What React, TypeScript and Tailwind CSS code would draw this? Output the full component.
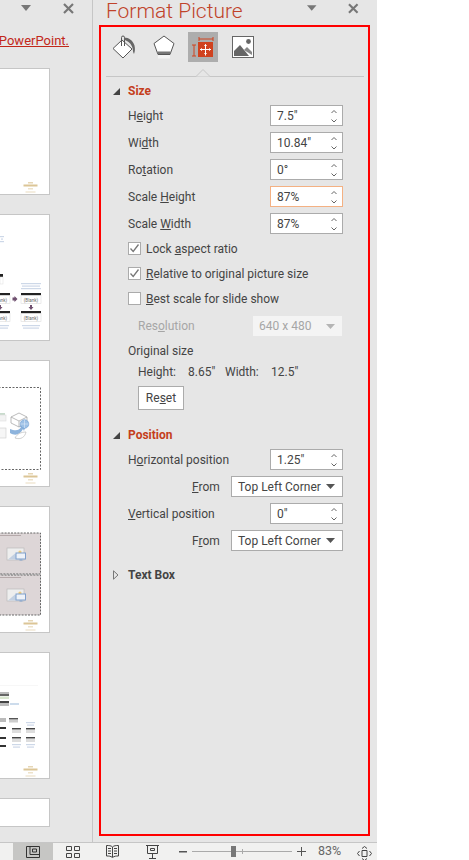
import type { ReactNode } from "react";

const font = "font-['Roboto','Open_Sans',sans-serif]";

function Spinner({ value, focused }: { value: string; focused?: boolean }) {
  return (
    <div
      className={`w-[73px] h-[21px] bg-white border flex items-center justify-between pl-[6px] pr-[4px] ${
        focused ? "border-[#f4b183]" : "border-[#ababab]"
      }`}
    >
      <span>{value}</span>
      <svg width="8" height="16" viewBox="0 0 8 16" fill="none" stroke="#666" strokeWidth="1">
        <path d="M1.5 5 4 2.5 6.5 5M1.5 11.5 4 14 6.500 11.500" />
      </svg>
    </div>
  );
}

function Select({ value, width, disabled }: { value: string; width: string; disabled?: boolean }) {
  return (
    <div
      className={`${width} flex items-center justify-between pl-[6px] pr-[7px] ${
        disabled ? "h-[20px] bg-[#f4f4f4] text-[#a6a6a6]" : "h-[21px] bg-white border border-[#ababab]"
      }`}
    >
      <span>{value}</span>
      <svg width="9" height="5" viewBox="0 0 9 5">
        <path d="M0 0h9L4.500 5z" fill={disabled ? "#b5b5b5" : "#555"} />
      </svg>
    </div>
  );
}

function FieldRow({ label, value, focused }: { label: ReactNode; value: string; focused?: boolean }) {
  return (
    <div className="flex items-center justify-between h-[21px] w-[215px]">
      <span>{label}</span>
      <Spinner value={value} focused={focused} />
    </div>
  );
}

function FromRow({ label }: { label: ReactNode }) {
  return (
    <div className="flex items-center h-[21px] w-[215px]">
      <span className="ml-[64px] w-[39px]">{label}</span>
      <Select value="Top Left Corner" width="w-[112px]" />
    </div>
  );
}

function CheckRow({ label, checked }: { label: ReactNode; checked?: boolean }) {
  return (
    <div className="flex items-center h-[25px] gap-[5px]">
      <div className="w-[13px] h-[13px] bg-white border border-[#ababab] flex items-center justify-center">
        {checked && (
          <svg width="11" height="11" viewBox="0 0 11 11" fill="none" stroke="#777" strokeWidth="1.3">
            <path d="M1.500 5.500 4.200 8.500 9.500 1.500" />
          </svg>
        )}
      </div>
      <span>{label}</span>
    </div>
  );
}

function SectionHeading({ title, open }: { title: string; open?: boolean }) {
  return (
    <div className="flex items-center h-[18px] ml-[12px]">
      <div className="w-[15px]">
        {open ? (
          <svg width="7" height="7" viewBox="0 0 7 7">
            <path d="M7 0v7H0z" fill="#444" />
          </svg>
        ) : (
          <svg width="6" height="10" viewBox="0 0 6 10" fill="none" stroke="#777">
            <path d="M.5.8 5 5 .5 9.200z" />
          </svg>
        )}
      </div>
      <span className={`font-bold ${open ? "text-[#c43e1c]" : "text-[#444]"}`}>{title}</span>
    </div>
  );
}

function PaneControls() {
  return (
    <>
      <svg width="12" height="6" viewBox="0 0 12 6">
        <path d="M1 0h10L6 6z" fill="#777" />
      </svg>
      <svg width="11" height="11" viewBox="0 0 11 11" stroke="#777" strokeWidth="2.2">
        <path d="M1 1l9 9M10 1l-9 9" />
      </svg>
    </>
  );
}

// tiny gold logo in the corner of each slide
function Logo({ y }: { y: number }) {
  return (
    <g fill="#dcc596">
      <rect x="28" y={y} width="5" height="1.500" opacity="0.7" />
      <rect x="23.500" y={y + 2.500} width="14" height="2" />
      <rect x="28" y={y + 6} width="5" height="1.500" opacity="0.5" />
      <rect x="25.500" y={y + 9.500} width="10" height="1" opacity="0.6" />
    </g>
  );
}

function BlankBox({ x, y, w, text }: { x: number; y: number; w: number; text: string }) {
  return (
    <g>
      <rect x={x} y={y} width={w} height="2.500" fill="#222" />
      <rect x={x} y={y + 2.500} width={w} height="8" fill="#fff" stroke="#ddd" strokeWidth="0.6" />
      <text x={x + w - 3} y={y + 8.500} fontSize="4.500" textAnchor="end" fill="#666" fontFamily="Roboto">
        {text}
      </text>
    </g>
  );
}

function Caption({ x, y, w, lines }: { x: number; y: number; w: number; lines: number }) {
  return (
    <g fill="#cdd8e8">
      {Array.from({ length: lines }).map((_, i) => (
        <rect key={i} x={x + (i % 2)} y={y + i * 2.500} width={w - (i % 2) * 2} height="1.200" />
      ))}
    </g>
  );
}

function ImagePlaceholder({ y }: { y: number }) {
  return (
    <g>
      <rect x="7" y={y} width="17" height="12" fill="#eee" stroke="#bbb" strokeWidth="0.7" />
      <path d={`M8 ${y + 11.500}l7-6 6 6z`} fill="#c3d0e2" />
      <circle cx="20" cy={y + 4} r="1.600" fill="#ecc97c" />
      <rect x="16" y={y + 5} width="9.500" height="6" fill="#eef2f8" stroke="#7f9fcb" />
      <rect x="19.500" y={y + 11.500} width="3" height="1" fill="#7f9fcb" />
    </g>
  );
}

function Slide({ children, height = 127 }: { children?: ReactNode; height?: number }) {
  return (
    <div className="bg-white border-r border-t border-b border-[#c6c6c6] w-[50px] shrink-0 box-border" style={{ height }}>
      <svg width="49" height={height - 2} viewBox={`0 0 49 ${height - 2}`} className="block">
        {children}
      </svg>
    </div>
  );
}

function SlidePanel() {
  return (
    <div className="w-[93px] h-full border-r border-[#c6c6c6] shrink-0 overflow-hidden">
      <div className="flex items-center h-[16px] justify-end gap-[31px] w-[74px]">
        <PaneControls />
      </div>
      <div className="mt-[15px] h-[20px] w-[69px] overflow-hidden flex justify-end text-[13px] text-[#c2281a] underline whitespace-nowrap">
        <span>t PowerPoint.</span>
      </div>
      <div className="mt-[17px] flex flex-col gap-[19px]">
        <Slide>
          <Logo y={113} />
        </Slide>
        <Slide>
          <Caption x={0} y={21} w={4} lines={3} />
          <rect x="0" y="59" width="3" height="3" fill="#222" />
          <rect x="0" y="62" width="3" height="7" fill="#fff" stroke="#ddd" strokeWidth="0.5" />
          <Caption x={21} y={68} w={20} lines={3} />
          <BlankBox x={-2} y={78} w={12} text="ank)" />
          <BlankBox x={-2} y={96} w={12} text="ank)" />
          <BlankBox x={21} y={78} w={20} text="(Blank)" />
          <BlankBox x={21} y={96} w={20} text="(Blank)" />
          <path d="M12.500 82.500h2v-1.500l3 3-3 3v-1.500h-2z" fill="#6f4f6f" />
          <path d="M30 90v2h-1.500l2.500 3 2.500-3H32v-2zM-1 90v2h-1.500l2.500 3 2.500-3H1v-2z" fill="#6f4f6f" />
          <Caption x={-1} y={110} w={10} lines={2} />
          <Caption x={22} y={110} w={18} lines={2} />
        </Slide>
        <Slide>
          <rect x="-5" y="26.500" width="45.500" height="82" fill="none" stroke="#666" strokeWidth="1" strokeDasharray="2 1.500" />
          <path d="M-1 52h6v2h-6z" fill="#c9dccd" />
          <rect x="-1" y="54" width="7" height="6" fill="#f3f3f3" stroke="#ddd" strokeWidth="0.6" />
          <rect x="-1" y="67" width="7" height="10" fill="#f6f6f6" stroke="#ccc" strokeWidth="0.6" />
          <path d="M11 56l8-4 8 4v6l-8 4-8-4zM11 56l8 4 8-4M19 60v6" fill="#fff" stroke="#aaa" strokeWidth="0.8" />
          <path d="M10 68c5 2 9 2 11-2l-2-1 7-1-2 6-1-2c-3 6-8 7-13 4z" fill="#8db3dc" />
          <circle cx="24.500" cy="63" r="4.300" fill="#9cc0e6" stroke="#6b9bd0" strokeWidth="0.6" />
          <path d="M20.500 63h8M24.500 59v8" stroke="#e8f1fa" strokeWidth="0.5" />
          <path d="M15 77c2-4 6-6 11-6-1 5-5 8-11 6z" fill="#fff" stroke="#bbb" strokeWidth="0.7" />
          <Logo y={112} />
        </Slide>
        <Slide>
          <rect x="-5" y="26" width="45.500" height="41" fill="#ddd6d7" stroke="#666" strokeDasharray="2 1.200" />
          <rect x="-5" y="68" width="45.500" height="40" fill="#ddd6d7" stroke="#666" strokeDasharray="2 1.200" />
          <rect x="0" y="28" width="21" height="1" fill="#b5a9aa" />
          <rect x="0" y="70" width="21" height="1" fill="#b5a9aa" />
          <ImagePlaceholder y={41} />
          <ImagePlaceholder y={82} />
          <Logo y={113} />
        </Slide>
        <Slide>
          <rect x="0" y="32" width="38" height="0.500" fill="#eee" />
          <rect x="0" y="39" width="9" height="2" fill="#bbb" />
          <rect x="0" y="41" width="9" height="2" fill="#666" />
          <rect x="0" y="43.500" width="9" height="2.500" fill="#d9e6cf" />
          <rect x="0" y="48" width="9" height="2" fill="#444" />
          <rect x="0" y="50" width="9" height="3" fill="#bbb" />
          <rect x="10" y="50" width="9" height="2" fill="#cddcec" />
          <rect x="0" y="65" width="6" height="4" fill="#bbb" />
          <rect x="9" y="65" width="9" height="1.500" fill="#555" />
          <rect x="9" y="67" width="9" height="2.500" fill="#ccc" />
          <rect x="0" y="74" width="6" height="2" fill="#333" />
          <rect x="0" y="84" width="6" height="2" fill="#333" />
          <rect x="0" y="92" width="6" height="2" fill="#333" />
          <rect x="12" y="75" width="9" height="1.500" fill="#444" />
          <rect x="12" y="77" width="9" height="3" fill="#ddd" />
          <rect x="12" y="84" width="9" height="1.500" fill="#444" />
          <rect x="12" y="86" width="9" height="3" fill="#ddd" />
          <rect x="26" y="75" width="9" height="1.500" fill="#444" />
          <rect x="26" y="77" width="9" height="3" fill="#ddd" />
          <rect x="26" y="84" width="9" height="1.500" fill="#444" />
          <rect x="26" y="86" width="9" height="3" fill="#ddd" />
          <Caption x={26} y={69} w={9} lines={2} />
          <Caption x={26} y={91} w={9} lines={2} />
          <Caption x={12} y={91} w={9} lines={2} />
          <Logo y={113} />
        </Slide>
        <Slide height={29} />
      </div>
    </div>
  );
}

function TabIcons() {
  return (
    <div className="flex items-center h-[30px] ml-[11px]">
      <svg width="24" height="24" viewBox="0 0 24 24" fill="none" className="mr-[17px]">
        <path d="M10 5 1 13.500 11 23 20 14z" fill="#fff" stroke="#555" />
        <path d="M9.500 11V2.500a1.500 1.500 0 0 1 3 0V11" stroke="#555" />
        <path d="M12 2.500c5 0 9 3 10.500 8 .8 3.500.5 6-.5 8.500-1-1.500-1-3.500-1.500-6C19.500 9 16 5.500 12 5z" fill="#666" />
      </svg>
      <svg width="22" height="24" viewBox="0 0 22 24" fill="none" className="mr-[13px]">
        <path d="M11 1 21 8.500 17 19.500H5L1 8.500z" fill="#fff" stroke="#555" />
        <rect x="4.500" y="16.500" width="13" height="2.500" fill="#777" />
        <path d="M5 20h12v3.500H5z" fill="#f4f4f4" />
      </svg>
      <div className="w-[30px] h-[30px] bg-[#adadad] flex items-center justify-center">
        <svg width="24" height="22" viewBox="0 0 24 22" fill="none">
          <path d="M8 1v4M8 3h14M22 1v4M1 9h4M3 9v11M1 20h4" stroke="#d0421f" />
          <rect x="7" y="6" width="15" height="15" fill="#d0421f" />
          <path d="M14.500 8.500v11M9 13.500h11M13.500 10l1-1.500 1 1.500M13.500 17l1 1.500 1-1.500M11 12.500l-1.500 1 1.500 1M18 12.500l1.500 1-1.500 1" stroke="#fff" />
        </svg>
      </div>
      <svg width="22" height="22" viewBox="0 0 22 22" fill="none" className="ml-[14px]">
        <rect x=".5" y=".5" width="21" height="21" fill="#fff" stroke="#666" />
        <path d="M2 20V15l6-6 9 11z" fill="#666" />
        <path d="M12 14l3-3 5 5v3z" fill="#888" />
        <circle cx="16.500" cy="5.500" r="2.400" fill="#666" />
      </svg>
    </div>
  );
}

function FormatPanel() {
  return (
    <div className="flex-1 min-w-0 flex flex-col">
      <div className="flex items-center h-[25px]">
        <span className="ml-[13px] text-[21px] leading-[23px] self-start font-light text-[#c0432a]">Format Picture</span>
        <div className="ml-auto mr-[18px] flex items-center gap-[31px] w-[53px] h-[16px] self-start">
          <PaneControls />
        </div>
      </div>
      <div className="ml-[6px] mr-[7px] h-[811px] border-2 border-[#ff0000] text-[12px] text-[#444]">
        <div className="mt-[5px]">
          <TabIcons />
        </div>
        <div className="relative mt-[14px] ml-[5px] mr-[4px] h-px bg-[#c6c6c6]">
          <svg width="14" height="8" viewBox="0 0 14 8" className="absolute left-[90px] top-[-7px]" fill="#e6e6e6" stroke="#c6c6c6">
            <path d="M0 7.500 7 .5l7 7" />
          </svg>
        </div>
        <div className="mt-[5px]">
          <SectionHeading title="Size" open />
        </div>
        <div className="mt-[5px] ml-[27px] flex flex-col gap-[6px]">
          <FieldRow label={<>H<u>e</u>ight</>} value={'7.5"'} />
          <FieldRow label={<>Wi<u>d</u>th</>} value={'10.84"'} />
          <FieldRow label={<>Ro<u>t</u>ation</>} value="0°" />
          <FieldRow label={<>Scale <u>H</u>eight</>} value="87%" focused />
          <FieldRow label={<>Scale <u>W</u>idth</>} value="87%" />
        </div>
        <div className="mt-[2px] ml-[27px]">
          <CheckRow label={<>Lock <u>a</u>spect ratio</>} checked />
          <CheckRow label={<><u>R</u>elative to original picture size</>} checked />
          <CheckRow label={<><u>B</u>est scale for slide show</>} />
        </div>
        <div className="mt-[5px] ml-[37px] flex items-center h-[20px] text-[#a6a6a6] w-[204px] justify-between">
          <span>Res<u>o</u>lution</span>
          <Select value="640 x 480" width="w-[89px]" disabled />
        </div>
        <div className="mt-[5px] ml-[27px] h-[20px] flex items-center">Original size</div>
        <div className="mt-[1px] ml-[37px] h-[20px] flex items-center">
          <span className="w-[50px]">Height:</span>
          <span className="w-[37px]">8.65"</span>
          <span className="w-[46px]">Width:</span>
          <span>12.5"</span>
        </div>
        <button className="block mt-[4px] ml-[37px] w-[46px] h-[24px] bg-white border border-[#ababab]">
          Re<u>s</u>et
        </button>
        <div className="mt-[16px]">
          <SectionHeading title="Position" open />
        </div>
        <div className="mt-[5px] ml-[27px] flex flex-col gap-[6px]">
          <FieldRow label={<>H<u>o</u>rizontal position</>} value={'1.25"'} />
          <FromRow label={<><u>F</u>rom</>} />
          <FieldRow label={<><u>V</u>ertical position</>} value={'0"'} />
          <FromRow label={<>F<u>r</u>om</>} />
        </div>
        <div className="mt-[15px]">
          <SectionHeading title="Text Box" />
        </div>
      </div>
    </div>
  );
}

function StatusBar() {
  return (
    <div className="h-[18px] bg-[#f1f1f0] border-t border-[#c6c6c6] flex items-center text-[12px] text-[#666] shrink-0 overflow-hidden">
      <div className="ml-[13px] w-[40px] h-full bg-[#c6c6c4] flex items-center justify-center">
        <svg width="14" height="12" viewBox="0 0 14 12" fill="none" stroke="#333">
          <path d="M.5.5h13v11H.5zM4 .5v8h9.500" />
          <path d="M6.500 3h4v3h-4z" />
        </svg>
      </div>
      <svg width="14" height="12" viewBox="0 0 14 12" fill="none" stroke="#444" className="ml-[13px]">
        <path d="M.5.5h5v4h-5zM8.500.5h5v4h-5zM.5 7.500h5v4h-5zM8.500 7.500h5v4h-5z" />
      </svg>
      <svg width="13" height="13" viewBox="0 0 13 13" fill="none" stroke="#444" className="ml-[26px]">
        <path d="M6.500 2C5 .5 3 .5.500.5v10.500c2.500 0 4 0 6 1.500 2-1.500 3.500-1.500 6-1.500V.5C10 .5 8 .5 6.500 2zM6.500 2v10M2 3.500h3M2 6h3M2 8.500h3M8 3.500h3M8 6h3M8 8.500h3" />
      </svg>
      <svg width="13" height="14" viewBox="0 0 13 14" fill="none" stroke="#444" className="ml-[27px]">
        <path d="M0 .5h13M1.500 .5v8h10v-8M6.500 8.500v5M3 13.500h7M4.500 3.500h4v2h-4z" />
      </svg>
      <svg width="8" height="2" viewBox="0 0 8 2" className="ml-[20px]">
        <rect width="8" height="1.500" fill="#555" />
      </svg>
      <div className="relative ml-[5px] w-[100px] h-[1px] bg-[#aaa]">
        <div className="absolute left-[39px] top-[-5px] w-[5px] h-[11px] bg-[#777]" />
        <div className="absolute left-[50px] top-[-2px] w-px h-[5px] bg-[#aaa]" />
      </div>
      <svg width="9" height="9" viewBox="0 0 9 9" stroke="#555" className="ml-[5px]">
        <path d="M0 4.500h9M4.500 0v9" />
      </svg>
      <span className="ml-[12px] w-[39px] text-[12.5px]">83%</span>
      <svg width="15" height="15" viewBox="0 0 15 15" fill="none" stroke="#444" className="shrink-0 mt-[3px]">
        <path d="M5 4.500h5v6H5zM5 2.500l2.500-2 2.500 2M5 12.500l2.500 2 2.500-2M2.500 5 .5 7.500l2 2.500M12.500 5l2 2.500-2 2.500" />
      </svg>
    </div>
  );
}

export default function App() {
  return (
    <div className={`w-[469px] h-[860px] bg-white overflow-hidden ${font}`}>
      <div className="w-[377px] h-full flex flex-col bg-[#e6e6e6]">
        <div className="flex flex-1 min-h-0">
          <SlidePanel />
          <FormatPanel />
        </div>
        <StatusBar />
      </div>
    </div>
  );
}
